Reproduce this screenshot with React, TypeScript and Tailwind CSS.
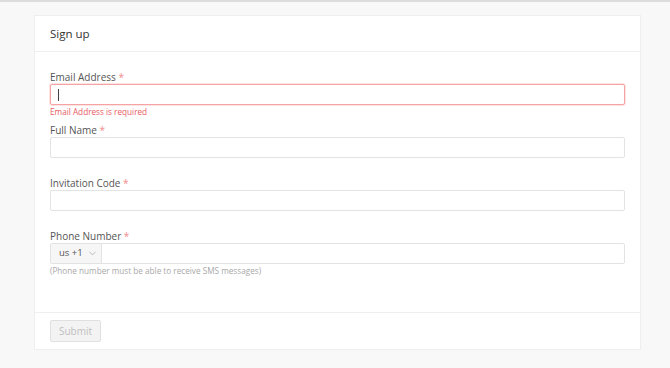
import React from 'react';

type FieldProps = {
  label: string;
  error?: string;
  hint?: string;
  children: React.ReactNode;
};

const Field: React.FC<FieldProps> = ({ label, error, hint, children }) => (
  <div className="h-[53px]">
    <label className="block h-[14px] text-[10px] leading-[14px] text-[#555]">
      {label} <span className="text-[#f28b8b]">*</span>
    </label>
    {children}
    {error && <p className="mt-[1px] text-[8.2px] leading-[11px] text-[#e85a63]">{error}</p>}
    {hint && <p className="mt-[1px] text-[8.2px] leading-[11px] text-[#a8a8a8]">{hint}</p>}
  </div>
);

export default function App() {
  return (
    <div className="min-h-[368px] border-t-2 border-[#dcdcdc] bg-[#f8f8f8] pt-[13px] font-['Open_Sans',sans-serif]">
      <div className="ml-[34px] w-[607px] border border-[#eeeeee] bg-white">
        {/* header */}
        <div className="flex h-[36px] items-center border-b border-[#efefef] px-[15px]">
          <h1 className="text-[11.5px] text-[#333]">Sign up</h1>
        </div>

        {/* body */}
        <div className="px-[15px] pt-[18px] pb-[30px]">
          <Field label="Email Address" error="Email Address is required">
            <div className="flex h-[21px] items-center rounded-[2px] border border-[#f6a3a3] px-[7px] shadow-[0_0_0_1px_#fde3e3]">
              <span className="h-[12px] w-px bg-[#444]" />
            </div>
          </Field>
          <Field label="Full Name">
            <input className="block h-[21px] w-full rounded-[2px] border border-[#e3e3e3] outline-none" />
          </Field>
          <Field label="Invitation Code">
            <input className="block h-[21px] w-full rounded-[2px] border border-[#e3e3e3] outline-none" />
          </Field>
          <Field label="Phone Number" hint="(Phone number must be able to receive SMS messages)">
            <div className="flex h-[21px] rounded-[2px] border border-[#e3e3e3]">
              <div className="flex w-[51px] items-center border-r border-[#e3e3e3] bg-[#f6f6f6] pl-[8px] text-[9.5px] text-[#555]">
                <span>us +1</span>
                <svg className="ml-[6px]" width="7" height="5" viewBox="0 0 7 5" fill="none" stroke="#b0b0b0" strokeWidth="0.8">
                  <path d="M0.5 0.8 L3.5 4 L6.5 0.8" />
                </svg>
              </div>
              <input className="min-w-0 flex-1 outline-none" />
            </div>
          </Field>
        </div>

        {/* footer */}
        <div className="flex h-[37px] items-center border-t border-[#efefef] px-[15px]">
          <button className="h-[22px] w-[51px] rounded-[2px] border border-[#e0e0e0] bg-[#f3f3f3] text-[10px] leading-none text-[#c0c0c0]">
            Submit
          </button>
        </div>
      </div>
    </div>
  );
}
